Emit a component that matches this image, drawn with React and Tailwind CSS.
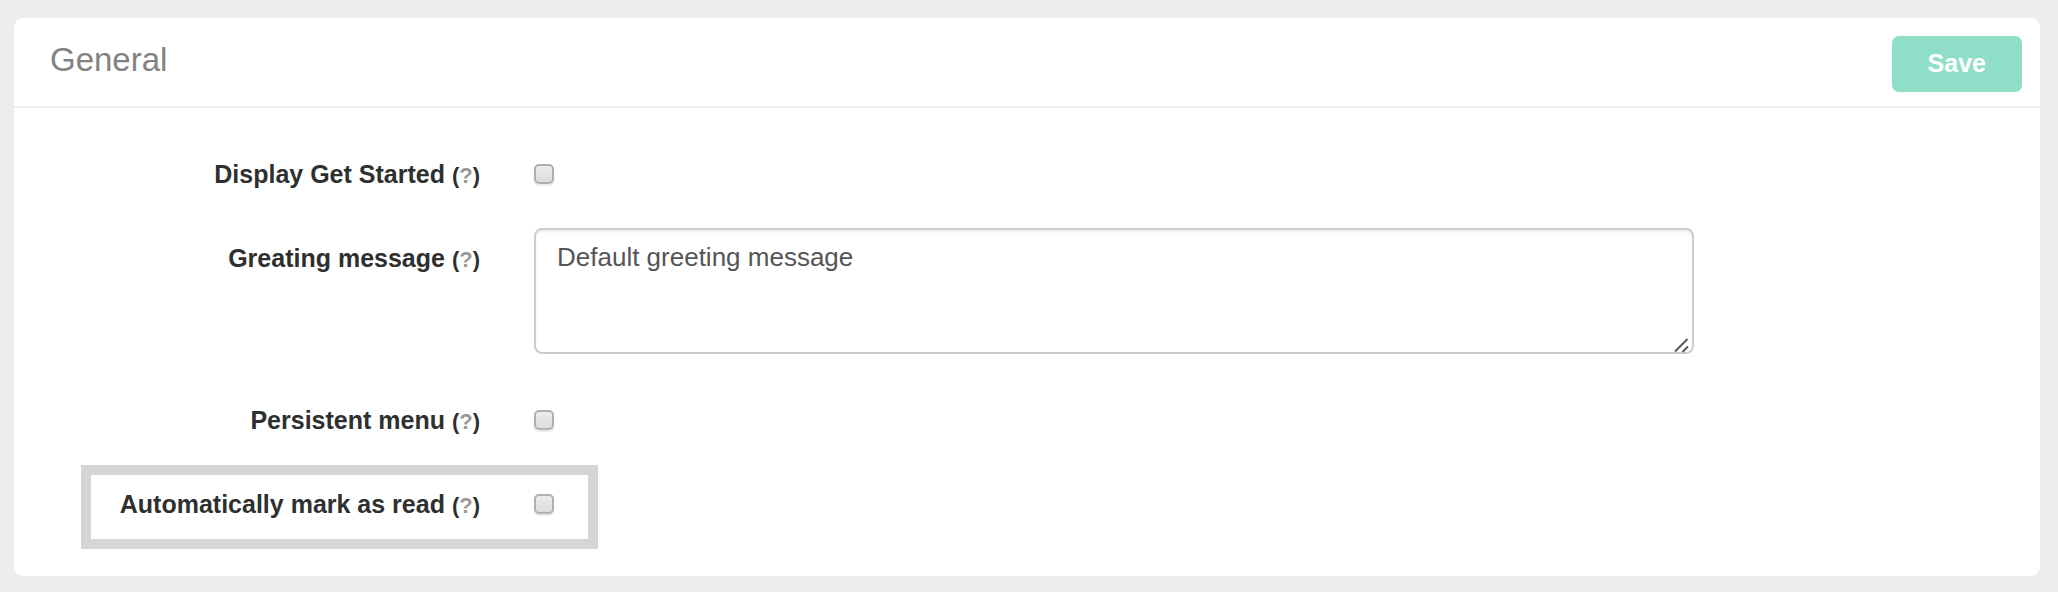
import React from "react";

function Row({ id, label, help, children }) {
  return (
    <div className="grid grid-cols-[466fr_1160fr_292fr] gap-x-[54px]">
      <div className="pt-3 text-right text-[25px] leading-9 font-bold text-[#2e3030]">
        <label htmlFor={id}>{label}</label>{" "}
        <span className="text-[22px]">
          (
          <abbr title={help} className="text-[#999] no-underline">
            ?
          </abbr>
          )
        </span>
      </div>
      {children}
    </div>
  );
}

function Checkbox({ id }) {
  return (
    <input
      id={id}
      type="checkbox"
      className="mt-5 block size-5 appearance-none rounded-[5px] border-2 border-[#b0b0b0] bg-linear-to-b from-[#ededed] to-[#dcdcdc] shadow-[0_2px_1px_rgba(0,0,0,0.08)] checked:bg-[#8fdfc8]"
    />
  );
}

export default function App() {
  return (
    <main className="min-h-screen bg-[#ededed] pt-[18px] pr-[18px] pb-4 pl-[14px] font-['Liberation_Sans',Arial,sans-serif]">
      <section className="rounded-[9px] bg-white pb-[27px]">
        <header className="flex items-start justify-between border-b-2 border-[#ededed] pt-[18px] pr-[18px] pb-[14px] pl-9">
          <h1 className="pt-1 text-[33px] leading-10 text-[#828282]">General</h1>
          <button
            type="button"
            className="h-14 rounded-[7px] bg-[#8fdfc8] px-9 pb-0.5 text-[25px] leading-8 font-bold text-white"
          >
            Save
          </button>
        </header>

        <form className="flex flex-col pt-9">
          <Row id="get-started" label="Display Get Started" help="Show the Get Started button">
            <div className="h-[84px]">
              <Checkbox id="get-started" />
            </div>
          </Row>

          <Row id="greeting" label="Greating message" help="Text shown before the first message">
            <div className="relative h-[162px]">
              <textarea
                id="greeting"
                defaultValue="Default greeting message"
                className="block h-[126px] w-full resize-none rounded-lg border-2 border-[#ccc] bg-white px-[21px] py-[9px] text-[26px] leading-9 text-[#555] shadow-[inset_0_2px_2px_rgba(0,0,0,0.075)]"
              />
              <svg
                aria-hidden="true"
                viewBox="0 0 16 16"
                className="pointer-events-none absolute top-[109px] right-[4px] size-4 stroke-[#555]"
                strokeWidth="2"
                fill="none"
              >
                <path d="M1 14.5 13.5 2M8.5 15 14 9.5" />
              </svg>
            </div>
          </Row>

          <Row id="menu" label="Persistent menu" help="Keep the menu visible">
            <div className="h-[84px]">
              <Checkbox id="menu" />
            </div>
          </Row>

          <Row id="mark-read" label="Automatically mark as read" help="Mark incoming messages as read">
            <div className="relative h-[75px] w-16">
              <Checkbox id="mark-read" />
              <div className="pointer-events-none absolute -top-[9px] right-0 h-[84px] w-[517px] border-10 border-[#d5d5d5]" />
            </div>
          </Row>
        </form>
      </section>
    </main>
  );
}
